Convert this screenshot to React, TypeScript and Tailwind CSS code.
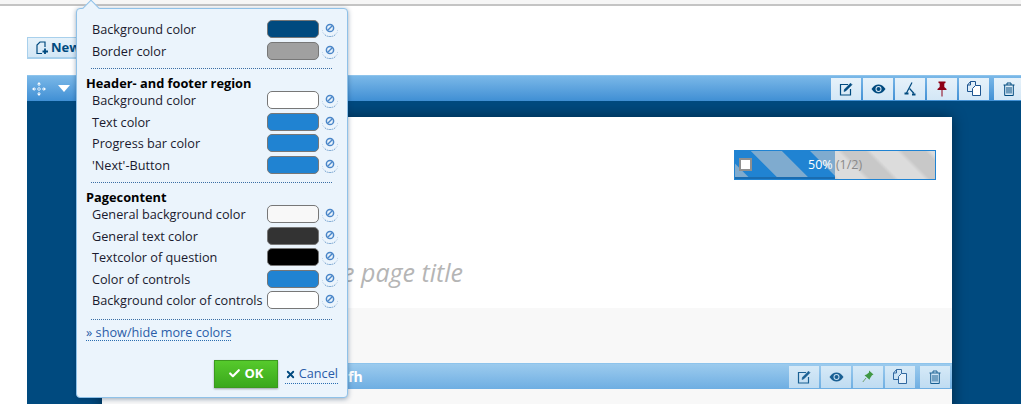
import { Check, X } from 'lucide-react';

const groups = [
    {
        title: '',
        rows: [
            { label: 'Background color', color: 'bg-[#004a7f]' },
            { label: 'Border color', color: 'bg-[#a0a0a0]' },
        ],
    },
    {
        title: 'Header- and footer region',
        rows: [
            { label: 'Background color', color: 'bg-white' },
            { label: 'Text color', color: 'bg-[#2083d2]' },
            { label: 'Progress bar color', color: 'bg-[#2083d2]' },
            { label: "'Next'-Button", color: 'bg-[#2083d2]' },
        ],
    },
    {
        title: 'Pagecontent',
        rows: [
            { label: 'General background color', color: 'bg-[#f8f8f8]' },
            { label: 'General text color', color: 'bg-[#333333]' },
            { label: 'Textcolor of question', color: 'bg-black' },
            { label: 'Color of controls', color: 'bg-[#2083d2]' },
            { label: 'Background color of controls', color: 'bg-white' },
        ],
    },
];

const EditIcon = () => (
    <svg width="14" height="14" viewBox="0 0 14 14" fill="none" stroke="#004a7f" strokeWidth="1.2">
        <path d="M9 2.500H1.500v10.500h10V7" />
        <path d="M5 9.500l.6-2.300L11.500 1.200l1.500 1.500-6 6z" fill="#004a7f" strokeWidth="0.6" />
    </svg>
);

const EyeIcon = () => (
    <svg width="15" height="10" viewBox="0 0 15 10">
        <path d="M0.500 5C2.500 1.800 5 .5 7.500 .5S12.500 1.800 14.500 5C12.500 8.200 10 9.500 7.500 9.500S2.500 8.200 .5 5z" fill="#004a7f" />
        <circle cx="7.500" cy="5" r="3" fill="#dcebf7" />
        <circle cx="7.500" cy="5" r="2" fill="#004a7f" />
    </svg>
);

const CutIcon = () => (
    <svg width="12" height="14" viewBox="0 0 12 14" fill="none" stroke="#004a7f" strokeWidth="1.200">
        <path d="M8 .5L2.500 11" />
        <path d="M5.500 6.500L10 11.500" />
        <path d="M.5 11.500h4M8 12.500h3.500" strokeWidth="1.800" />
    </svg>
);

const PinIcon = ({ green }: { green?: boolean }) =>
    green ? (
        <svg width="12" height="13" viewBox="0 0 12 13">
            <path d="M7 .5l4.500 4-1.500 .7-2 3-.5 1.500-5-4.500 2-.7 2.500-2z" fill="#2f8f1c" />
            <path d="M4 8L.8 12" stroke="#6f9a50" strokeWidth="1" />
        </svg>
    ) : (
        <svg width="10" height="16" viewBox="0 0 10 16">
            <path d="M1.500 .5h7v1.500l-1.200 .5v3.500l2.200 2v1h-9v-1l2.200-2v-3.500l-1.200-.5z" fill="#8e0016" />
            <path d="M5 9v6.500" stroke="#8e0016" strokeWidth="1" />
        </svg>
    );

const CopyIcon = () => (
    <svg width="14" height="15" viewBox="0 0 14 15" fill="none" stroke="#1d5590" strokeWidth="1">
        <path d="M.5 4L3.500 .5H8.500V4.500M.5 4V10.500H5.500M.5 4H3.500V.5" />
        <path d="M5.500 7.500L8.500 4.500H13.500V14.500H5.500z" fill="white" />
    </svg>
);

const TrashIcon = () => (
    <svg width="12" height="14" viewBox="0 0 12 14" fill="none" stroke="#004a7f" strokeWidth="1">
        <path d="M.5 3h11M4 3V1h4v2M1.700 3v10.500h8.600V3M4 5v6.500M6 5v6.500M8 5v6.500" />
    </svg>
);

const ToolButton = ({ children, className }: { children: React.ReactNode; className?: string }) => (
    <div className={`flex h-[22px] w-[30px] shrink-0 items-center justify-center bg-gradient-to-b from-[#e6f2fa] to-[#d3e7f6] ${className ?? ''}`}>
        {children}
    </div>
);

const ResetIcon = () => (
    <div className="flex h-[17px] w-4 shrink-0 items-start justify-center rounded-b-[10px] border-b border-dotted border-[#2a6db0]">
        <svg width="10" height="10" viewBox="0 0 10 10" className="mt-[3px]">
            <circle cx="5" cy="5" r="3.600" fill="none" stroke="#4a86c8" strokeWidth="1.500" />
            <path d="M2.500 7.500l5-5" stroke="#4a86c8" strokeWidth="1.500" />
        </svg>
    </div>
);

const ColorPopup = () => (
    <div className="absolute left-[76px] top-2 h-[390px] w-[272px] rounded-[4px] border border-[#8fc1e8] bg-[#ebf4fc] px-[9px] pt-[11px] text-[12.700px] text-[#1a1a2e] shadow-[0_1px_5px_rgba(0,40,80,0.4)]">
        <div className="absolute -top-[7px] left-[8px] h-3 w-3 rotate-45 border-l border-t border-[#8fc1e8] bg-[#ebf4fc]" />
        {groups.map((group, i) => (
            <div key={i}>
                {group.title && <div className="h-[17px] text-[12.800px] font-bold leading-[19px] text-black">{group.title}</div>}
                {group.rows.map((row, j) => (
                    <div key={j} className="flex h-[21.500px] items-start pl-[6px]">
                        <span className="w-[175px] whitespace-nowrap leading-[18.500px]">{row.label}</span>
                        <div className={`h-[18px] w-[52px] rounded-[5px] border border-[#777777] ${row.color}`} />
                        <div className="ml-[3px]"><ResetIcon /></div>
                    </div>
                ))}
                <div className={`ml-[5px] h-0 w-[241px] border-t border-dotted border-[#3a6ea5] ${i === 2 ? 'mb-[5px] mt-[6px]' : 'mb-[5px] mt-[5px]'}`} />
            </div>
        ))}
        <div className="w-fit whitespace-nowrap border-b border-dotted border-[#2a6db0] text-[12.700px] leading-[15px] text-[#2a5ca8]">» show/hide more colors</div>
        <div className="mt-[19px] flex items-start pl-[128px]">
            <div className="flex h-[28px] w-[64px] items-center justify-center gap-[3px] border border-[#3c9a1e] bg-gradient-to-b from-[#56ca2c] to-[#3aa81c] text-[13px] font-bold text-white shadow-[0_1px_2px_rgba(0,0,0,0.35)]">
                <Check size={13} strokeWidth={4} />
                OK
            </div>
            <div className="ml-[7px] mt-[6px] flex h-[18px] items-center gap-[3px] whitespace-nowrap border-b border-dotted border-[#2a6db0] text-[12.700px] text-[#2a5ca8]">
                <X size={11} strokeWidth={4} className="text-[#004a7f]" />
                Cancel
            </div>
        </div>
    </div>
);

const App = () => {
    return (
        <div className="relative h-[404px] w-[1021px] overflow-hidden bg-white font-['Open_Sans',sans-serif]">
            {/* top strip */}
            <div className="h-[6px] border-b-2 border-[#c4c4c4] bg-[#f6f6f6]" />

            {/* toolbar */}
            <div className="pl-[27px] pt-[31px]">
                <div className="flex h-[22px] w-[80px] items-center gap-[2px] border border-b-2 border-[#a8d0ec] bg-gradient-to-b from-[#e6f2fa] to-[#d3e7f6] pl-[8px] text-[13px] font-bold text-[#004a7f]">
                    <svg width="13" height="14" viewBox="0 0 13 14" fill="none" stroke="#004a7f" strokeWidth="1.200">
                        <path d="M6 12.500H1V4l3-3h5v5" />
                        <path d="M9 7.500v5.500M6.500 10.500h5.500" strokeWidth="1.800" />
                    </svg>
                    New
                </div>
            </div>

            {/* block */}
            <div className="ml-[27px] mt-[16px] w-[1000px] bg-[#004a7f] pb-4">
                <div className="flex h-[26px] items-center border-t border-[#8ec4ec] bg-gradient-to-b from-[#7ab8e8] to-[#3f8fd4] pl-[5px]">
                    <svg width="14" height="14" viewBox="0 0 14 14" fill="white">
                        <path d="M7 0l2 2.500H5zM7 14l2-2.500H5zM0 7l2.500-2v4zM14 7l-2.500-2v4z" />
                        <path d="M7 2.500v9M2.500 7h9" stroke="white" strokeDasharray="1.500 1" />
                    </svg>
                    <div className="ml-[12px] h-0 w-0 border-x-[6px] border-t-[7px] border-x-transparent border-t-white" />
                    <div className="ml-auto flex items-center gap-[2px] pr-[3px]">
                        <ToolButton><EditIcon /></ToolButton>
                        <ToolButton><EyeIcon /></ToolButton>
                        <ToolButton><CutIcon /></ToolButton>
                        <ToolButton><PinIcon /></ToolButton>
                        <ToolButton><CopyIcon /></ToolButton>
                        <ToolButton className="ml-[3px]"><TrashIcon /></ToolButton>
                    </div>
                </div>

                <div className="ml-[75px] mt-[16px] w-[850px] bg-[#f8f8f8] shadow-[0_0_14px_rgba(0,0,0,0.45)]">
                    <div className="h-[191px] bg-white pt-[33px]">
                        <div className="ml-[632px] flex h-[30px] w-[202px] border border-[#2083d2] bg-[repeating-linear-gradient(45deg,#dcdcdc_0px,#dcdcdc_8px,#c8c8c8_12px,#c8c8c8_28px,#dcdcdc_32px,#dcdcdc_42px)]">
                            <div className="flex w-[100px] items-center border-b-2 border-[#1a6cb0] bg-[repeating-linear-gradient(45deg,#7fabcf_0px,#7fabcf_9px,#2083d2_10px,#2083d2_29px,#7fabcf_30px,#7fabcf_42px)] pl-[4px]">
                                <div className="h-[13px] w-[13px] shrink-0 border-2 border-[#8f8f8f] bg-white" />
                            </div>
                            <div className="relative">
                                <span className="absolute -left-[27px] top-[5px] whitespace-nowrap text-[12.500px] text-white">50% <span className="text-[#8a8a8a]">(1/2)</span></span>
                            </div>
                        </div>
                        <div className="ml-[153px] mt-[77px] text-[25px] italic leading-[30px] text-[#b5b5b5]">Enter the page title</div>
                    </div>
                    <div className="h-[55px]" />
                    <div className="flex h-[26px] items-center border-t border-[#8ec4ec] bg-gradient-to-b from-[#9ccbee] to-[#6eaee2]">
                        <span className="ml-[246px] text-[14px] font-bold text-white">fh</span>
                        <div className="ml-auto flex items-center gap-[2px] pr-[2px] opacity-80">
                            <ToolButton><EditIcon /></ToolButton>
                            <ToolButton><EyeIcon /></ToolButton>
                            <ToolButton><PinIcon green /></ToolButton>
                            <ToolButton><CopyIcon /></ToolButton>
                            <ToolButton className="ml-[3px]"><TrashIcon /></ToolButton>
                        </div>
                    </div>
                    <div className="h-[40px]" />
                </div>
            </div>

            <ColorPopup />
        </div>
    );
};

export default App;
